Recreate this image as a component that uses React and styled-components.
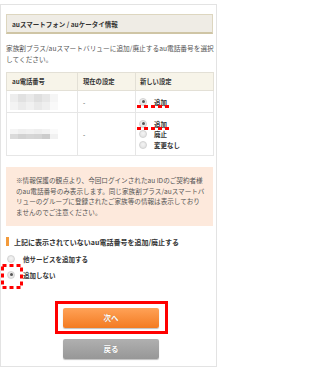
import React from "react";
import styled, { createGlobalStyle } from "styled-components";

const GlobalStyle = createGlobalStyle`
  html, body { margin: 0; padding: 0; background: #fff; }
  body { font-family: "Noto Sans CJK JP", "Noto Sans", sans-serif; color: #444; }
  * { box-sizing: border-box; }
`;

const Frame = styled.div`
  margin-top: 4px;
  width: 217px;
  border: 1px solid #e3e3e3;
  padding: 9px 3px 7px 5px;
`;

const TitleBar = styled.div`
  height: 20px;
  background: #efece5;
  border: 1px solid #ddd6bf;
  border-bottom: 2px solid #cfc5a5;
  padding-left: 5px;
  display: flex;
  align-items: center;
  font-size: 6.5px;
  font-weight: 700;
  color: #333;
`;

const Desc = styled.p`
  margin: 9px 0 0;
  font-size: 6.7px;
  line-height: 11px;
  color: #555;
  white-space: nowrap;
`;

const Table = styled.table`
  margin-top: 7px;
  width: 207px;
  border-collapse: collapse;
  table-layout: fixed;
`;

const Th = styled.th`
  height: 18px;
  background: #f7f4e9;
  border: 1px solid #e3e0d6;
  text-align: left;
  font-weight: 700;
  font-size: 6.3px;
  color: #333;
  padding: 0 0 0 ${(p) => p.$pad || 5}px;
`;

const Td = styled.td`
  height: ${(p) => p.$h}px;
  border: 1px solid #e6e6e6;
  padding: 0 0 0 ${(p) => p.$pad || 5}px;
  font-size: 6.5px;
  color: #444;
  vertical-align: middle;
`;

const OptionList = styled.div`
  display: flex;
  flex-direction: column;
`;

const Option = styled.label`
  position: relative;
  display: flex;
  align-items: center;
  gap: ${(p) => p.$gap || 7}px;
  height: ${(p) => p.$h || 10.5}px;
  font-size: 6.5px;
  font-weight: 700;
  color: #333;
  white-space: nowrap;
`;

const Radio = styled.span`
  width: 8px;
  height: 8px;
  flex: 0 0 8px;
  border-radius: 50%;
  border: 1px solid #d4d4d4;
  background: radial-gradient(circle at 50% 40%, #f4f4f4 0%, #dedede 100%);
  display: flex;
  align-items: center;
  justify-content: center;
  &::after {
    content: "";
    width: 3px;
    height: 3px;
    border-radius: 50%;
    background: ${(p) => (p.$checked ? "#555" : "transparent")};
  }
`;

const DashLine = styled.span`
  position: absolute;
  left: -2px;
  top: 9px;
  width: 33px;
  height: 3px;
  background: repeating-linear-gradient(to right, #f00 0 4px, transparent 4px 7px);
`;

const DashBox = styled.svg`
  position: absolute;
  left: -6px;
  top: -3px;
  width: 22px;
  height: 25px;
  overflow: visible;
`;

const Note = styled.div`
  margin-top: 11px;
  background: #fde9dc;
  padding: 8px 6px 8px 10px;
  font-size: 6.6px;
  line-height: 10.7px;
  color: #555;
  white-space: nowrap;
`;

const Heading = styled.h2`
  margin: 11px 0 0;
  display: flex;
  align-items: center;
  gap: 5px;
  height: 10px;
  font-size: 7px;
  font-weight: 700;
  color: #333;
  &::before {
    content: "";
    width: 3px;
    height: 9px;
    background: #f39a3a;
  }
`;

const BottomOptions = styled.div`
  margin-top: 4px;
  display: flex;
  flex-direction: column;
  padding-left: 1px;
`;

const Buttons = styled.div`
  margin-top: 25px;
  display: flex;
  flex-direction: column;
  align-items: center;
  gap: 11px;
  padding-left: 3px;
`;

const ButtonWrap = styled.div`
  position: relative;
`;

const Highlight = styled.span`
  position: absolute;
  left: -8px;
  right: -9px;
  top: -7px;
  bottom: -6px;
  border: 3px solid #f00;
  pointer-events: none;
`;

const Button = styled.button`
  width: 96px;
  height: 20px;
  border: none;
  border-radius: 2px;
  font-family: inherit;
  font-size: 7.5px;
  font-weight: 700;
  color: #fff;
  text-shadow: 0 0 1px rgba(0, 0, 0, 0.25);
  background: ${(p) =>
    p.$variant === "gray"
      ? "linear-gradient(#b0b0b0, #979797)"
      : "linear-gradient(#ffa257, #f37b22)"};
  box-shadow: 0 1px 1px rgba(0, 0, 0, 0.25);
  display: flex;
  align-items: center;
  justify-content: center;
  padding: 0;
`;

const Mosaic = ({ rows, cell = 8, h = 8 }) => (
  <svg width={rows[0].length * cell} height={rows.length * h} style={{ display: "block" }}>
    {rows.map((r, i) =>
      r.map((c, j) => <rect key={i + "-" + j} x={j * cell} y={i * h} width={cell} height={h} fill={c} />)
    )}
  </svg>
);

const mosaic1 = [
  ["#ededed", "#e1e1e1", "#e9e9e9", "#dfdfdf", "#e7e7e7", "#f5f5f5"],
  ["#f3f3f3", "#ebebeb", "#f1f1f1", "#e9e9e9", "#efefef", "#f9f9f9"],
];
const mosaic2 = [
  ["#f4f4f4", "#efefef", "#f1f1f1", "#eeeeee", "#f2f2f2", "#fafafa"],
  ["#dadada", "#d2d2d2", "#d6d6d6", "#d4d4d4", "#cccccc", "#f1f1f1"],
];

export default function App() {
  return (
    <>
      <GlobalStyle />
      <Frame>
        <TitleBar>auスマートフォン / auケータイ情報</TitleBar>
        <Desc>
          家族割プラス/auスマートバリューに追加/廃止するau電話番号を選択
          <br />
          してください。
        </Desc>
        <Table>
          <colgroup>
            <col style={{ width: 71 }} />
            <col style={{ width: 58 }} />
            <col style={{ width: 78 }} />
          </colgroup>
          <thead>
            <tr>
              <Th>au電話番号</Th>
              <Th>現在の設定</Th>
              <Th $pad={4}>新しい設定</Th>
            </tr>
          </thead>
          <tbody>
            <tr>
              <Td $h={22} $pad={3}>
                <Mosaic rows={mosaic1} />
              </Td>
              <Td $h={22}>-</Td>
              <Td $h={22} $pad={3}>
                <OptionList>
                  <Option>
                    <Radio $checked />
                    追加
                    <DashLine />
                  </Option>
                </OptionList>
              </Td>
            </tr>
            <tr>
              <Td $h={43} $pad={3}>
                <Mosaic rows={mosaic2} h={5} />
              </Td>
              <Td $h={43}>-</Td>
              <Td $h={43} $pad={3}>
                <OptionList>
                  <Option>
                    <Radio $checked />
                    追加
                    <DashLine />
                  </Option>
                  <Option>
                    <Radio />
                    廃止
                  </Option>
                  <Option>
                    <Radio />
                    変更なし
                  </Option>
                </OptionList>
              </Td>
            </tr>
          </tbody>
        </Table>
        <Note>
          ※情報保護の観点より、今回ログインされたau IDのご契約者様
          <br />
          のau電話番号のみ表示します。同じ家族割プラス/auスマートバ
          <br />
          リューのグループに登録されたご家族等の情報は表示しており
          <br />
          ませんのでご注意ください。
        </Note>
        <Heading>上記に表示されていないau電話番号を追加/廃止する</Heading>
        <BottomOptions>
          <Option $h={16} $gap={8}>
            <Radio />
            他サービスを追加する
          </Option>
          <Option $h={16} $gap={8}>
            <Radio $checked />
            追加しない
            <DashBox viewBox="0 0 22 25">
              <rect
                x="1.5"
                y="1.5"
                width="19"
                height="22"
                fill="none"
                stroke="#f00"
                strokeWidth="3"
                strokeDasharray="4 3"
              />
            </DashBox>
          </Option>
        </BottomOptions>
        <Buttons>
          <ButtonWrap>
            <Button>次へ</Button>
            <Highlight />
          </ButtonWrap>
          <Button $variant="gray">戻る</Button>
        </Buttons>
      </Frame>
    </>
  );
}
